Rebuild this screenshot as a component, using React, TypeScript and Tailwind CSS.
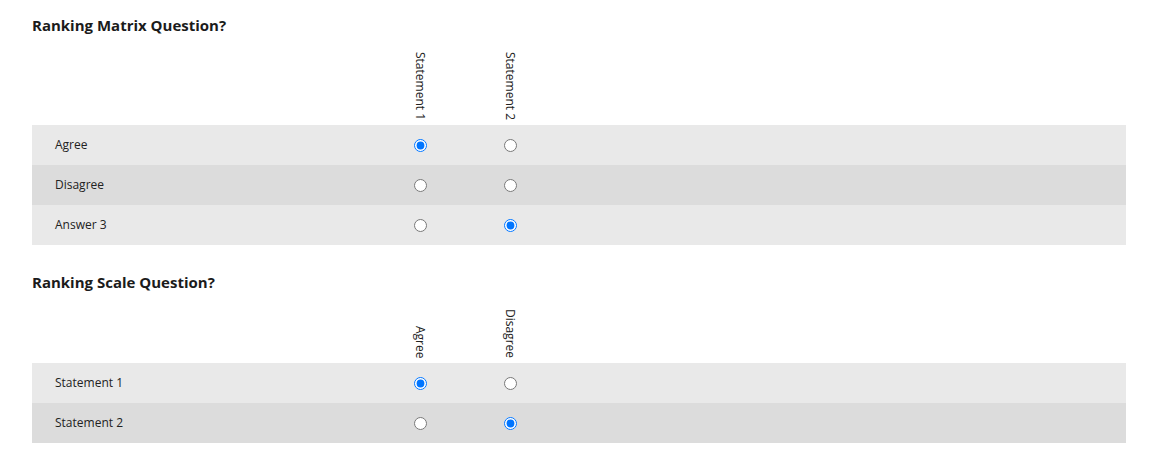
import React from "react";

type Q = {
  title: string;
  cols: string[];
  rows: { label: string; checked: number }[];
};

const questions: Q[] = [
  {
    title: "Ranking Matrix Question?",
    cols: ["Statement 1", "Statement 2"],
    rows: [
      { label: "Agree", checked: 0 },
      { label: "Disagree", checked: -1 },
      { label: "Answer 3", checked: 1 },
    ],
  },
  {
    title: "Ranking Scale Question?",
    cols: ["Agree", "Disagree"],
    rows: [
      { label: "Statement 1", checked: 0 },
      { label: "Statement 2", checked: 1 },
    ],
  },
];

function Question({ q, qi }: { q: Q; qi: number }) {
  return (
    <div className="flex flex-col">
      <h3 className="text-[15px] leading-[20px] font-bold text-[#1b1b1b]">{q.title}</h3>
      <table className="w-full border-collapse mt-[17px]">
        <thead>
          <tr>
            <th className="w-[343px] p-0"></th>
            {q.cols.map((c) => (
              <th key={c} className="w-[90px] p-0 pb-[5px] align-bottom">
                <div className="flex justify-center">
                  <span className="block [writing-mode:vertical-rl] text-[12px] leading-[16px] font-normal text-[#222]">
                    {c}
                  </span>
                </div>
              </th>
            ))}
            <th className="p-0"></th>
          </tr>
        </thead>
        <tbody>
          {q.rows.map((r, ri) => (
            <tr key={r.label} className={ri % 2 === 0 ? "bg-[#e9e9e9]" : "bg-[#dcdcdc]"}>
              <td className="h-[40px] p-0 pl-[23px] text-[12px] text-[#222] align-middle">{r.label}</td>
              {q.cols.map((c, ci) => (
                <td key={c} className="h-[40px] p-0 text-center align-middle">
                  <div className="flex justify-center items-center h-[40px]">
                    <input
                      type="radio"
                      name={`q${qi}-r${ri}`}
                      defaultChecked={r.checked === ci}
                      className="m-0 w-[13px] h-[13px]"
                    />
                  </div>
                </td>
              ))}
              <td className="p-0"></td>
            </tr>
          ))}
        </tbody>
      </table>
    </div>
  );
}

export default function App() {
  return (
    <div
      className="bg-white h-[461px] overflow-hidden pl-[32px] pt-[15px] flex flex-col gap-[27px]"
      style={{ fontFamily: '"Open Sans", "Noto Sans", sans-serif' }}
    >
      <div className="w-[1094px] flex flex-col gap-[27px]">
        {questions.map((q, i) => (
          <Question key={q.title} q={q} qi={i} />
        ))}
      </div>
    </div>
  );
}
